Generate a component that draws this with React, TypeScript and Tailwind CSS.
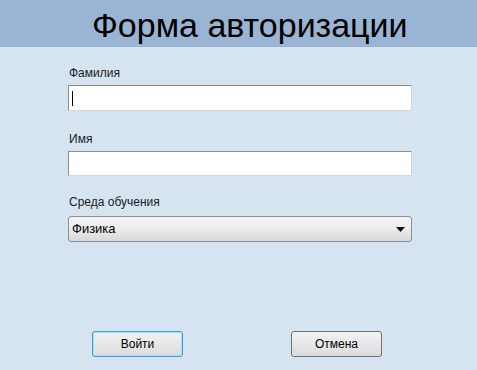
export default function App() {
  const font = { fontFamily: '"Liberation Sans", Tahoma, sans-serif' };
  return (
    <div className="w-[477px] h-[370px] bg-[#d6e3f1] flex flex-col" style={font}>
      <div className="h-[47px] bg-[#9ab5d3] flex items-center pl-[92px]">
        <h1 className="text-[34px] leading-none text-black font-['Liberation_Sans',sans-serif] pt-[2px]">
          Форма авторизации
        </h1>
      </div>
      <div className="flex flex-col pl-[68px] w-[412px] ml-0 box-content">
        <label className="mt-[18px] pl-[1px] text-[12px] leading-[16px] text-[#1b1b1b]">Фамилия</label>
        <div className="mt-[4px] h-[26px] w-[344px] bg-white border border-[#8d8d8d] border-b-[#d5d5d5] border-r-[#d5d5d5] flex items-center pl-[3px]">
          <div className="w-px h-[15px] bg-black" />
        </div>
        <label className="mt-[20px] pl-[1px] text-[12px] leading-[16px] text-[#1b1b1b]">Имя</label>
        <div className="mt-[4px] h-[25px] w-[344px] bg-white border border-[#8d8d8d] border-b-[#d5d5d5] border-r-[#d5d5d5]" />
        <label className="mt-[18px] pl-[1px] text-[12px] leading-[16px] text-[#1b1b1b]">Среда обучения</label>
        <div className="mt-[6px] h-[26px] w-[344px] rounded-[3px] border border-[#8f8f8f] bg-gradient-to-b from-[#f4f4f4] via-[#ebebeb] to-[#d9d9d9] flex items-center justify-between pl-[3px] pr-[6px]">
          <span className="text-[13px] text-black">Физика</span>
          <svg width="9" height="5" viewBox="0 0 9 5">
            <path d="M0 0h9L4.5 5z" fill="#111" />
          </svg>
        </div>
      </div>
      <div className="mt-auto mb-[13px] flex pl-[92px] gap-[108px]">
        <button className="w-[91px] h-[26px] rounded-[3px] border border-[#3c9fd6] shadow-[inset_0_0_0_1px_#a6dcf5] bg-gradient-to-b from-[#f2f2f2] to-[#dcdcdc] text-[12px] text-black">
          Войти
        </button>
        <button className="w-[91px] h-[26px] rounded-[3px] border border-[#707070] bg-gradient-to-b from-[#f2f2f2] to-[#dcdcdc] text-[12px] text-black">
          Отмена
        </button>
      </div>
    </div>
  );
}
